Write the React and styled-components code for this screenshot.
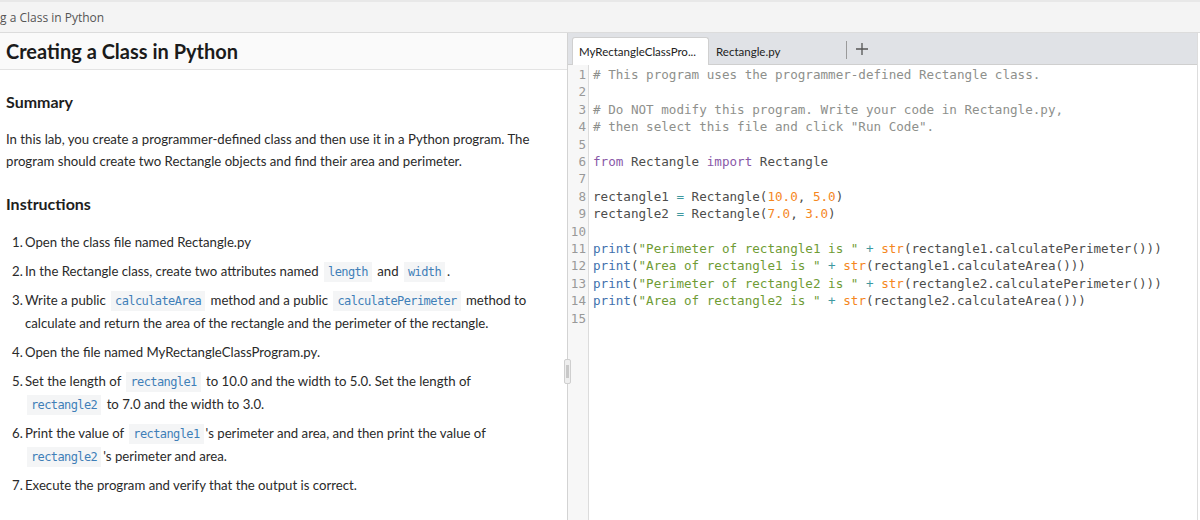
import React from "react";
import styled, { createGlobalStyle } from "styled-components";

const GlobalStyle = createGlobalStyle`
  html, body {
    margin: 0;
    padding: 0;
    background: #fff;
  }
  body {
    font-family: Lato, "Open Sans", sans-serif;
    color: #222;
  }
`;

const Page = styled.div`
  height: 520px;
  display: flex;
  flex-direction: column;
  overflow: hidden;
  border-top: 2px solid #e8e8e8;
  box-sizing: border-box;
`;

const TitleBar = styled.div`
  height: 30px;
  flex: none;
  display: flex;
  align-items: center;
  background: #f4f4f4;
  border-bottom: 1px solid #dcdcdc;
  font-family: "Open Sans", sans-serif;
  font-size: 12px;
  color: #555;
  white-space: nowrap;
  overflow: hidden;
`;

const Main = styled.div`
  flex: 1;
  display: flex;
  min-height: 0;
`;

const LeftPanel = styled.section`
  width: 567px;
  flex: none;
  border-right: 1px solid #d3d3d3;
  position: relative;
`;

const LeftHeader = styled.h1`
  margin: 0;
  height: 36px;
  display: flex;
  align-items: center;
  padding: 0 6px;
  background: #fafafa;
  border-bottom: 1px solid #e3e3e3;
  font-size: 20px;
  font-weight: 700;
  color: #1b1b1b;
`;

const LeftBody = styled.div`
  padding: 0 22px 0 6px;
  font-size: 13.2px;
  color: #2a2a2a;
`;

const SectionTitle = styled.h2`
  margin: 0;
  padding-top: ${(p) => p.$top}px;
  font-size: 16px;
  font-weight: 700;
  color: #1e1e1e;
  line-height: 22px;
`;

const Para = styled.p`
  margin: 15px 0 0;
  line-height: 22px;
`;

const Steps = styled.ol`
  margin: 16px 0 0;
  padding-left: 19px;
  list-style: none;
  counter-reset: step;
`;

const Step = styled.li`
  counter-increment: step;
  line-height: 23px;
  margin-bottom: 6px;
  position: relative;

  &::before {
    content: counter(step) ".";
    position: absolute;
    left: -13px;
  }
`;

const Code = styled.code`
  font-family: "DejaVu Sans Mono", monospace;
  font-size: 12px;
  letter-spacing: -0.6px;
  line-height: 1;
  color: #3f7fb8;
  background: #f4f5f6;
  padding: 3px 4px;
  margin: 0 2px;
`;

const Grip = styled.div`
  position: absolute;
  right: -4px;
  top: 326px;
  width: 5px;
  height: 23px;
  border: 1px solid #cfcfcf;
  border-radius: 2px;
  background: #eee;

  &::after {
    content: "";
    position: absolute;
    left: 1px;
    right: 1px;
    top: 5px;
    bottom: 5px;
    background: #c8c8c8;
  }
`;

const RightPanel = styled.section`
  flex: 1;
  display: flex;
  flex-direction: column;
  border-right: 1px solid #ddd;
  margin-right: 2px;
`;

const TabBar = styled.div`
  height: 31px;
  flex: none;
  display: flex;
  align-items: flex-end;
  padding-left: 4px;
  background: #e0e2e6;
  border-bottom: 1px solid #cfcfcf;
`;

const Tab = styled.div`
  height: 28px;
  display: flex;
  align-items: center;
  padding: 0 6px;
  margin-bottom: -1px;
  width: ${(p) => p.$w}px;
  font-size: 11.5px;
  color: #222;
  background: ${(p) => (p.$active ? "#fff" : "transparent")};
  border: 1px solid ${(p) => (p.$active ? "#d0d0d0" : "transparent")};
  border-bottom: none;
  border-radius: 3px 3px 0 0;
  box-sizing: border-box;
`;

const TabDivider = styled.div`
  width: 1px;
  height: 18px;
  background: #9a9a9a;
  align-self: center;
  margin: 2px 0 0 3px;
`;

const AddTab = styled.div`
  align-self: center;
  margin: 0 0 0 8px;
  display: flex;
  color: #555;
`;

const Editor = styled.div`
  flex: 1;
  display: flex;
  font-family: "DejaVu Sans Mono", monospace;
  font-size: 12.6px;
  line-height: 17.4px;
`;

const Gutter = styled.div`
  width: 20px;
  flex: none;
  background: #f7f7f7;
  border-right: 1px solid #dcdcdc;
  padding-top: 1px;
  text-align: right;
  color: #999;
`;

const LineNo = styled.div`
  padding-right: 2px;
`;

const Lines = styled.div`
  flex: 1;
  padding: 1px 0 0 4px;
  color: #4d4d4c;
  white-space: pre;
`;

const Line = styled.div`
  height: 17.4px;
`;

const Tok = styled.span`
  color: ${(p) => p.$c};
`;

const C = {
  com: "#8e908c",
  kw: "#8959a8",
  num: "#f5871f",
  fn: "#4271ae",
  str: "#6f9c35",
  op: "#3e999f",
};

const codeLines = [
  [["# This program uses the programmer-defined Rectangle class.", C.com]],
  [],
  [["# Do NOT modify this program. Write your code in Rectangle.py,", C.com]],
  [["# then select this file and click \"Run Code\".", C.com]],
  [],
  [["from", C.kw], [" Rectangle "], ["import", C.kw], [" Rectangle"]],
  [],
  [["rectangle1 "], ["=", C.op], [" Rectangle("], ["10.0", C.num], [", "], ["5.0", C.num], [")"]],
  [["rectangle2 "], ["=", C.op], [" Rectangle("], ["7.0", C.num], [", "], ["3.0", C.num], [")"]],
  [],
  [["print", C.fn], ["("], ["\"Perimeter of rectangle1 is \"", C.str], [" "], ["+", C.op], [" "], ["str", C.num], ["(rectangle1.calculatePerimeter()))"]],
  [["print", C.fn], ["("], ["\"Area of rectangle1 is \"", C.str], [" "], ["+", C.op], [" "], ["str", C.num], ["(rectangle1.calculateArea()))"]],
  [["print", C.fn], ["("], ["\"Perimeter of rectangle2 is \"", C.str], [" "], ["+", C.op], [" "], ["str", C.num], ["(rectangle2.calculatePerimeter()))"]],
  [["print", C.fn], ["("], ["\"Area of rectangle2 is \"", C.str], [" "], ["+", C.op], [" "], ["str", C.num], ["(rectangle2.calculateArea()))"]],
  [],
];

function PlusIcon() {
  return (
    <svg width="14" height="14" viewBox="0 0 14 14">
      <path d="M7 1v12M1 7h12" stroke="#555" strokeWidth="1.3" />
    </svg>
  );
}

export default function App() {
  return (
    <>
      <GlobalStyle />
      <Page>
        <TitleBar>g a Class in Python</TitleBar>
        <Main>
          <LeftPanel>
            <LeftHeader>Creating a Class in Python</LeftHeader>
            <LeftBody>
              <SectionTitle $top={21}>Summary</SectionTitle>
              <Para>
                In this lab, you create a programmer-defined class and then use it in a Python program. The
                program should create two Rectangle objects and find their area and perimeter.
              </Para>
              <SectionTitle $top={21}>Instructions</SectionTitle>
              <Steps>
                <Step>Open the class file named Rectangle.py</Step>
                <Step>
                  In the Rectangle class, create two attributes named <Code>length</Code> and <Code>width</Code>.
                </Step>
                <Step>
                  Write a public <Code>calculateArea</Code> method and a public <Code>calculatePerimeter</Code> method to
                  calculate and return the area of the rectangle and the perimeter of the rectangle.
                </Step>
                <Step>Open the file named MyRectangleClassProgram.py.</Step>
                <Step>
                  Set the length of <Code>rectangle1</Code> to 10.0 and the width to 5.0. Set the length of{" "}
                  <Code>rectangle2</Code> to 7.0 and the width to 3.0.
                </Step>
                <Step>
                  Print the value of <Code>rectangle1</Code>'s perimeter and area, and then print the value of{" "}
                  <Code>rectangle2</Code>'s perimeter and area.
                </Step>
                <Step>Execute the program and verify that the output is correct.</Step>
              </Steps>
            </LeftBody>
            <Grip />
          </LeftPanel>
          <RightPanel>
            <TabBar>
              <Tab $active $w={137}>MyRectangleClassPro...</Tab>
              <Tab $w={134}>Rectangle.py</Tab>
              <TabDivider />
              <AddTab>
                <PlusIcon />
              </AddTab>
            </TabBar>
            <Editor>
              <Gutter>
                {codeLines.map((_, i) => (
                  <LineNo key={i}>{i + 1}</LineNo>
                ))}
              </Gutter>
              <Lines>
                {codeLines.map((toks, i) => (
                  <Line key={i}>
                    {toks.map(([t, c], j) =>
                      c ? (
                        <Tok key={j} $c={c}>
                          {t}
                        </Tok>
                      ) : (
                        <React.Fragment key={j}>{t}</React.Fragment>
                      )
                    )}
                  </Line>
                ))}
              </Lines>
            </Editor>
          </RightPanel>
        </Main>
      </Page>
    </>
  );
}
